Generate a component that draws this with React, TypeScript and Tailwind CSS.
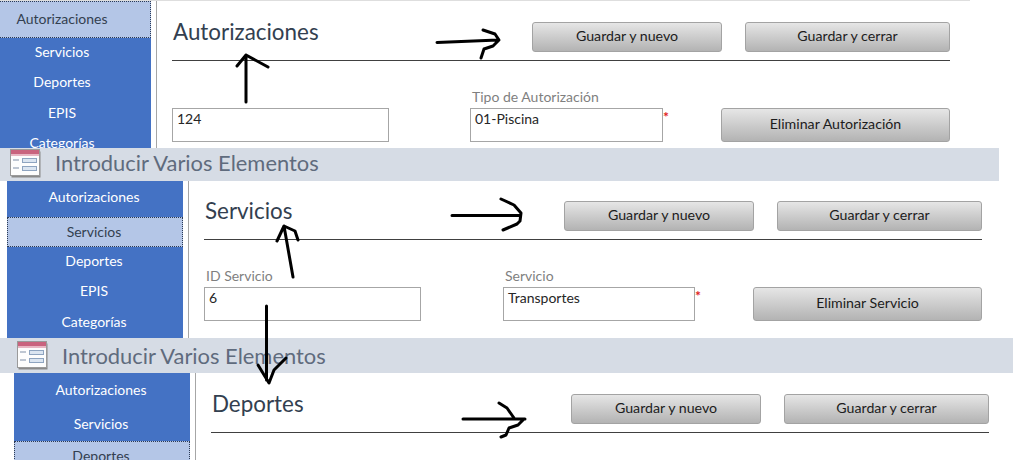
import React from "react";

const font = { fontFamily: '"Lato", "Open Sans", sans-serif' };

function NavItem({ label, className, active }: { label: string; className: string; active?: boolean }) {
  return (
    <div
      className={
        (active
          ? "flex shrink-0 items-center justify-center border border-dotted border-[#2b3a55] bg-[#b4c6e7] pr-[2px] pb-[2px] text-[14px] text-[#333f50] "
          : "flex shrink-0 items-center justify-center pr-[2px] pb-[2px] text-[14px] text-white ") + className
      }
    >
      {label}
    </div>
  );
}

function GrayButton({ label, className }: { label: string; className: string }) {
  return (
    <div
      className={
        "flex items-center justify-center rounded-[3px] border border-[#a3a3a3] bg-gradient-to-b from-[#e6e6e6] to-[#b3b3b3] pb-[2px] text-[14.200px] text-[#1c1c1c] " +
        className
      }
    >
      {label}
    </div>
  );
}

function Field({ label, value, width, required }: { label?: string; value: string; width: string; required?: boolean }) {
  return (
    <div className="relative flex flex-col">
      {label && <div className="absolute left-[2px] top-[-20px] text-[14px] leading-[18px] text-[#7f7f7f]">{label}</div>}
      <div className={"h-[34px] border border-[#a6a6a6] bg-white px-1 pt-[1px] text-[14px] leading-[18px] text-[#262626] " + width}>{value}</div>
      {required && <span className="absolute right-[-6px] top-[2px] text-[14px] font-bold leading-[14px] text-[#e02020]">*</span>}
    </div>
  );
}

type Nav = { label: string; className: string; active?: boolean };

function Screen({
  height,
  left,
  top,
  nav,
  title,
  fields,
}: {
  height: string;
  left: string;
  top: string;
  nav: Nav[];
  title: string;
  fields?: React.ReactNode;
}) {
  return (
    <div className={"flex w-full shrink-0 overflow-hidden bg-white " + height + " " + left}>
      <div className="flex w-[176px] shrink-0 flex-col bg-[#4472c4]">
        {nav.map((n) => (
          <NavItem key={n.label} {...n} />
        ))}
      </div>
      <div className="ml-[5px] box-content w-[778px] shrink-0 border-l border-[#a6a6a6] pl-[15px]">
        <div className={"flex h-full w-[778px] flex-col " + top}>
          <div className="flex h-[39px] shrink-0 items-start border-b border-[#404040]">
            <div className="mt-[-3px] flex-1 pl-[1px] text-[22.400px] leading-[26px] text-[#333f50]">{title}</div>
            <GrayButton label="Guardar y nuevo" className="h-[30px] w-[190px]" />
            <GrayButton label="Guardar y cerrar" className="ml-[23px] h-[30px] w-[205px]" />
          </div>
          {fields}
        </div>
      </div>
    </div>
  );
}

function TitleBar({ className }: { className: string }) {
  return (
    <div className={"flex shrink-0 items-center bg-[#d6dce5] " + className}>
      <svg width="31" height="29" viewBox="0 0 31 29" className="shrink-0">
        <rect x="1.500" y="2.500" width="29" height="26" fill="#8a8a8a" />
        <rect x="0.500" y="0.500" width="29" height="26" fill="#fdfdfd" stroke="#9a9a9a" />
        <rect x="1" y="1" width="28" height="4" fill="#c9637e" />
        <rect x="1" y="5" width="28" height="2" fill="#e8b5c2" />
        <path d="M3 11h6M3 19h6" stroke="#a9b4c4" strokeWidth="1.500" />
        <rect x="12.500" y="9.500" width="14" height="4" fill="#dbe5f1" stroke="#8ea4c0" />
        <rect x="12.500" y="17.500" width="14" height="4" fill="#dbe5f1" stroke="#8ea4c0" />
      </svg>
      <span className="ml-[14px] text-[21.900px] font-normal leading-[28px] text-[#5f6b7d]">Introducir Varios Elementos</span>
    </div>
  );
}

export default function App() {
  const ink = { fill: "none", stroke: "#000", strokeWidth: 3, strokeLinecap: "round", strokeLinejoin: "round" } as const;
  return (
    <div style={font} className="relative h-[460px] w-[1016px] overflow-hidden bg-white">
      <div className="h-px w-[970px] bg-[#dedede]" />
      <Screen
        height="h-[147px]"
        left="ml-[-25px]"
        top="pt-[21px]"
        title="Autorizaciones"
        nav={[
          { label: "Autorizaciones", className: "h-[37px]", active: true },
          { label: "Servicios", className: "h-[29px]" },
          { label: "Deportes", className: "h-[31px]" },
          { label: "EPIS", className: "h-[30px]" },
          { label: "Categorías", className: "h-[30px]" },
        ]}
        fields={
          <div className="mt-[47px] flex">
            <Field value="124" width="w-[217px]" />
            <div className="ml-[81px]">
              <Field label="Tipo de Autorización" value="01-Piscina" width="w-[193px]" required />
            </div>
            <GrayButton label="Eliminar Autorización" className="ml-[58px] h-[34px] w-[229px]" />
          </div>
        }
      />
      <TitleBar className="h-[33px] w-[999px] pb-[3px] pl-[10px]" />
      <Screen
        height="h-[157px]"
        left="ml-[7px]"
        top="pt-[20px]"
        title="Servicios"
        nav={[
          { label: "Autorizaciones", className: "h-[36px] pb-[5px]" },
          { label: "Servicios", className: "h-[30px]", active: true },
          { label: "Deportes", className: "h-[29px]" },
          { label: "EPIS", className: "h-[31px]" },
          { label: "Categorías", className: "h-[31px]" },
        ]}
        fields={
          <div className="mt-[47px] flex">
            <Field label="ID Servicio" value="6" width="w-[217px]" />
            <div className="ml-[82px]">
              <Field label="Servicio" value="Transportes" width="w-[192px]" required />
            </div>
            <GrayButton label="Eliminar Servicio" className="ml-[58px] h-[34px] w-[229px]" />
          </div>
        }
      />
      <TitleBar className="h-[35px] w-[1013px] pl-[17px]" />
      <Screen
        height="h-[87px]"
        left="ml-[14px]"
        top="pt-[21px]"
        title="Deportes"
        nav={[
          { label: "Autorizaciones", className: "h-[34px]" },
          { label: "Servicios", className: "h-[34px]" },
          { label: "Deportes", className: "h-[30px]", active: true },
        ]}
      />
      <svg width="1016" height="460" viewBox="0 0 1016 460" className="pointer-events-none absolute left-0 top-0">
        <path d="M246 102V55M237 66l9-11 22 12" {...ink} />
        <path d="M437 42.500L498 40M483 30l12 4 4 6-6 6-9 3-3 9" {...ink} />
        <path d="M293 277L284 226M277 241l7-15 11 5 3 9" {...ink} />
        <path d="M452 215.500H519M501 199l13 6 7 8-1 8-3 3-14 6" {...ink} />
        <path d="M266.500 306V380M258 365l11 18 5-13 12-12" {...ink} />
        <path d="M463 419H525M499 403l8 5 7 10M524 419l-6 6-9 3-3 7-5 2" {...ink} />
      </svg>
    </div>
  );
}
